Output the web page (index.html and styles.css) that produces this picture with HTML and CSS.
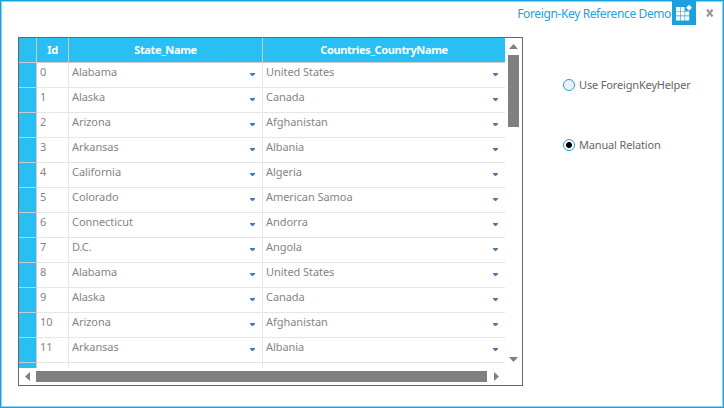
FILE: index.html
```html
<!DOCTYPE html>
<html lang="en">
<head>
<meta charset="utf-8">
<title>Foreign-Key Reference Demo</title>
<link rel="stylesheet" href="styles.css">
</head>
<body>
<div class="window">
<header class="titlebar">
<h1 class="title">Foreign-Key Reference Demo</h1>
<svg class="logo" width="24" height="24" viewBox="0 0 24 24"><path fill="#1ba1e2" d="M0 0h24v24H0z"/><path fill="#fff" d="M4 6h4v4H4zM8.600 6h4v4h-4zM4 10.600h4v4H4zM8.600 10.600h4v4h-4zM13.200 10.600h4v4h-4zM4 15.200h4v4.300H4zM8.600 15.200h4v4.300h-4zM13.200 15.200h4v4.300h-4z"/><path fill="#fff" d="M17 3.700l3 3-3 3-3-3z"/></svg>
<svg class="close" width="8" height="8" viewBox="0 0 8 8"><path d="M1 .5l5.500 7M6.500 .5l-5.500 7" stroke="#999" stroke-width="2.2"/></svg>
</header>
<main class="content">
<section class="grid">
<div class="view">
<div class="row head"><span class="mark"></span><span class="id">Id</span><span class="state">State_Name</span><span class="country">Countries_CountryName</span></div>
<div class="row"><span class="mark"></span><span class="id">0</span><span class="state">Alabama<i class="drop"></i></span><span class="country">United States<i class="drop"></i></span></div>
<div class="row"><span class="mark"></span><span class="id">1</span><span class="state">Alaska<i class="drop"></i></span><span class="country">Canada<i class="drop"></i></span></div>
<div class="row"><span class="mark"></span><span class="id">2</span><span class="state">Arizona<i class="drop"></i></span><span class="country">Afghanistan<i class="drop"></i></span></div>
<div class="row"><span class="mark"></span><span class="id">3</span><span class="state">Arkansas<i class="drop"></i></span><span class="country">Albania<i class="drop"></i></span></div>
<div class="row"><span class="mark"></span><span class="id">4</span><span class="state">California<i class="drop"></i></span><span class="country">Algeria<i class="drop"></i></span></div>
<div class="row"><span class="mark"></span><span class="id">5</span><span class="state">Colorado<i class="drop"></i></span><span class="country">American Samoa<i class="drop"></i></span></div>
<div class="row"><span class="mark"></span><span class="id">6</span><span class="state">Connecticut<i class="drop"></i></span><span class="country">Andorra<i class="drop"></i></span></div>
<div class="row"><span class="mark"></span><span class="id">7</span><span class="state">D.C.<i class="drop"></i></span><span class="country">Angola<i class="drop"></i></span></div>
<div class="row"><span class="mark"></span><span class="id">8</span><span class="state">Alabama<i class="drop"></i></span><span class="country">United States<i class="drop"></i></span></div>
<div class="row"><span class="mark"></span><span class="id">9</span><span class="state">Alaska<i class="drop"></i></span><span class="country">Canada<i class="drop"></i></span></div>
<div class="row"><span class="mark"></span><span class="id">10</span><span class="state">Arizona<i class="drop"></i></span><span class="country">Afghanistan<i class="drop"></i></span></div>
<div class="row"><span class="mark"></span><span class="id">11</span><span class="state">Arkansas<i class="drop"></i></span><span class="country">Albania<i class="drop"></i></span></div>
<div class="row"><span class="mark"></span><span class="id"></span><span class="state"></span><span class="country"></span></div>
</div>
<div class="vscroll"><i class="arrow up"></i><div class="vtrack"><div class="vthumb"></div></div><i class="arrow down"></i></div>
<div class="hscroll"><i class="arrow left"></i><div class="hthumb"></div><i class="arrow right"></i></div>
</section>
<aside class="options">
<div class="option"><span class="radio"></span>Use ForeignKeyHelper</div>
<div class="option"><span class="radio checked"></span>Manual Relation</div>
</aside>
</main>
</div>
</body>
</html>
```
FILE: styles.css
```css
* { box-sizing: border-box; }
body { margin: 0; background: #fff; font: 11px/16px "Noto Sans", "Open Sans", sans-serif; color: #666; overflow: hidden; }
.window { width: 724px; height: 408px; border: 1px solid #1ba1e2; box-shadow: inset 0 0 0 1px #8dd0f0; }
.titlebar { height: 36px; display: flex; justify-content: flex-end; align-items: flex-start; padding-right: 9px; }
.title { margin: 5px 1px 0 0; font-size: 12px; line-height: 16px; font-weight: 400; letter-spacing: -.38px; color: #1ba1e2; white-space: nowrap; }
.logo { display: block; }
.close { display: block; margin: 8px 0 0 10px; }
.content { display: flex; padding-left: 17px; }
.grid { width: 505px; height: 349px; border: 1px solid #666; display: grid; grid-template: 330px 17px / 486px 17px; }
.view { overflow: hidden; }
.row { display: grid; grid-template-columns: 18px 32px 194px 242px; height: 25px; color: #858585; letter-spacing: -.06px; }
.row span { border-right: 1px solid #e6e6e6; border-bottom: 1px solid #e6e6e6; padding: 0 3px; line-height: 17px; white-space: nowrap; display: flex; justify-content: space-between; }
.row .country { border-right: 0; }
.row .mark { background: #29bff2; border-color: #ccc; }
.row.head span { background: #29bff2; border-color: #ccc; color: #fff; font-weight: 700; line-height: 24px; letter-spacing: -.35px; justify-content: center; }
.drop { width: 5px; height: 3px; margin: 10px 4px 0 0; background: #4a78b5; clip-path: polygon(0 0, 100% 0, 100% 34%, 60% 100%, 40% 100%, 0 34%); }
.vscroll { display: flex; flex-direction: column; align-items: center; padding: 6px 0; }
.vtrack { flex: 1; padding-top: 6px; }
.vthumb { width: 11px; height: 72px; background: #808080; }
.arrow { display: block; background: #808080; width: 9px; height: 5px; }
.up { clip-path: polygon(50% 0, 100% 100%, 0 100%); }
.down { clip-path: polygon(0 0, 100% 0, 50% 100%); }
.hscroll { grid-column: 1 / 3; display: flex; align-items: center; padding-left: 6px; }
.left, .right { width: 5px; height: 9px; }
.left { clip-path: polygon(0 50%, 100% 0, 100% 100%); }
.right { clip-path: polygon(0 0, 100% 50%, 0 100%); }
.hthumb { width: 451px; height: 11px; margin: 0 7px 0 6px; background: #808080; }
.options { padding: 40px 0 0 40px; letter-spacing: -.16px; }
.option { display: flex; align-items: center; gap: 4px; height: 16px; margin-bottom: 44px; white-space: nowrap; }
.radio { width: 12px; height: 12px; border: 1px solid #1ba1e2; border-radius: 50%; background: #f0f0f0; }
.checked { background: radial-gradient(circle, #000 0 2.7px, #fff 3.2px); }
```
